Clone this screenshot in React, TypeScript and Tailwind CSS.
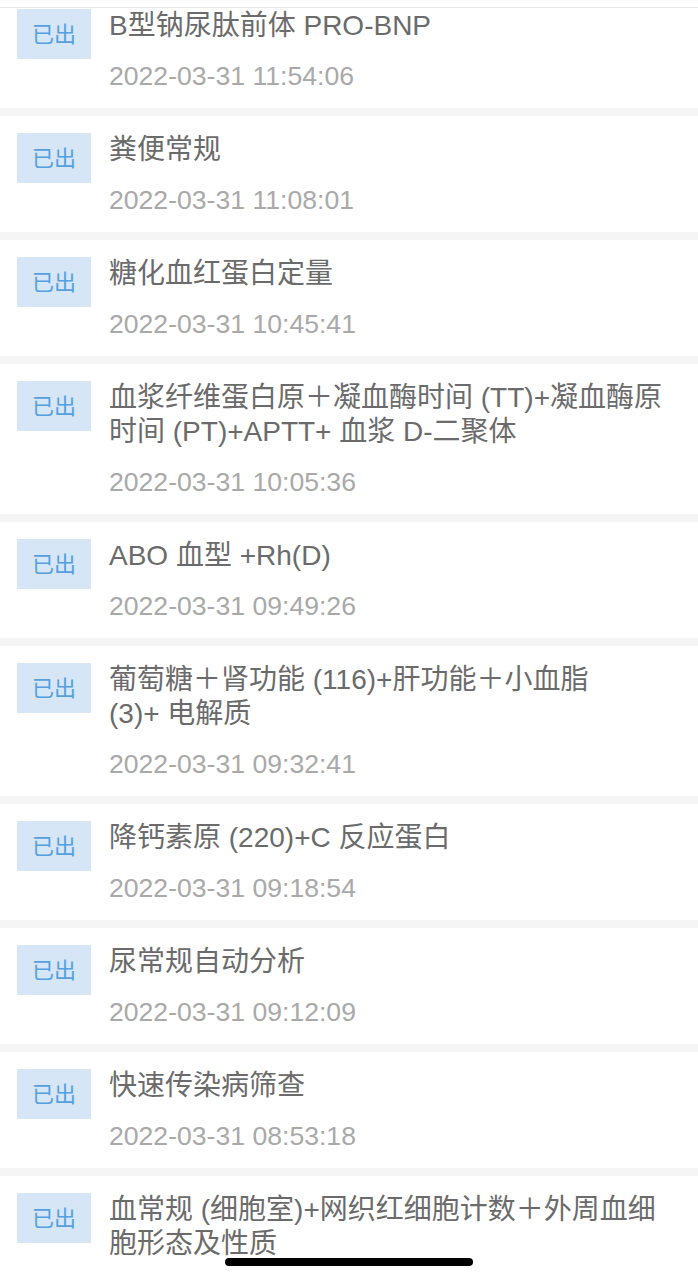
const reports = [
  { name: "B型钠尿肽前体 PRO-BNP", time: "2022-03-31 11:54:06" },
  { name: "粪便常规", time: "2022-03-31 11:08:01" },
  { name: "糖化血红蛋白定量", time: "2022-03-31 10:45:41" },
  {
    name: "血浆纤维蛋白原＋凝血酶时间 (TT)+凝血酶原时间 (PT)+APTT+\u00a0血浆 D-二聚体",
    time: "2022-03-31 10:05:36",
  },
  { name: "ABO 血型 +Rh(D)", time: "2022-03-31 09:49:26" },
  {
    name: "葡萄糖＋肾功能 (116)+肝功能＋小血脂 (3)+\u00a0电解质",
    time: "2022-03-31 09:32:41",
  },
  { name: "降钙素原 (220)+C 反应蛋白", time: "2022-03-31 09:18:54" },
  { name: "尿常规自动分析", time: "2022-03-31 09:12:09" },
  { name: "快速传染病筛查", time: "2022-03-31 08:53:18" },
  {
    name: "血常规 (细胞室)+网织红细胞计数＋外周血细胞形态及性质",
    time: "2022-03-31 08:48:22",
  },
];

const font = {
  fontFamily: '"Liberation Sans", "Noto Sans CJK SC", sans-serif',
};

const ReportRow = ({ name, time }: { name: string; time: string }) => {
  return (
    <div className="flex gap-[18px] bg-white pl-[17px] pr-[20px] pt-[17px] pb-[18px]">
      <div className="flex h-[50px] w-[74px] shrink-0 items-center justify-center bg-[#d6e6f6] text-[22px] text-[#55a0dc]">
        已出
      </div>
      <div className="flex min-w-0 flex-1 flex-col">
        <p className="text-[28px] leading-[34px] text-[#6b6b6b]">{name}</p>
        <p className="mt-[19px] text-[26.6px] leading-[28px] text-[#a9a9a9]">
          {time}
        </p>
      </div>
    </div>
  );
};

const App = () => {
  return (
    <div
      className="relative h-[1280px] w-[698px] overflow-hidden bg-[#f5f5f5]"
      style={font}
    >
      <div className="-mt-2 flex flex-col gap-2">
        {reports.map((r) => (
          <ReportRow key={r.time} name={r.name} time={r.time} />
        ))}
      </div>

      <div className="absolute left-0 right-0 top-0 h-[8px] border-b border-[#e6e6e6] bg-white" />
      <div className="absolute bottom-[14px] left-[225px] h-[8px] w-[248px] rounded-full bg-black" />
    </div>
  );
};

export default App;
